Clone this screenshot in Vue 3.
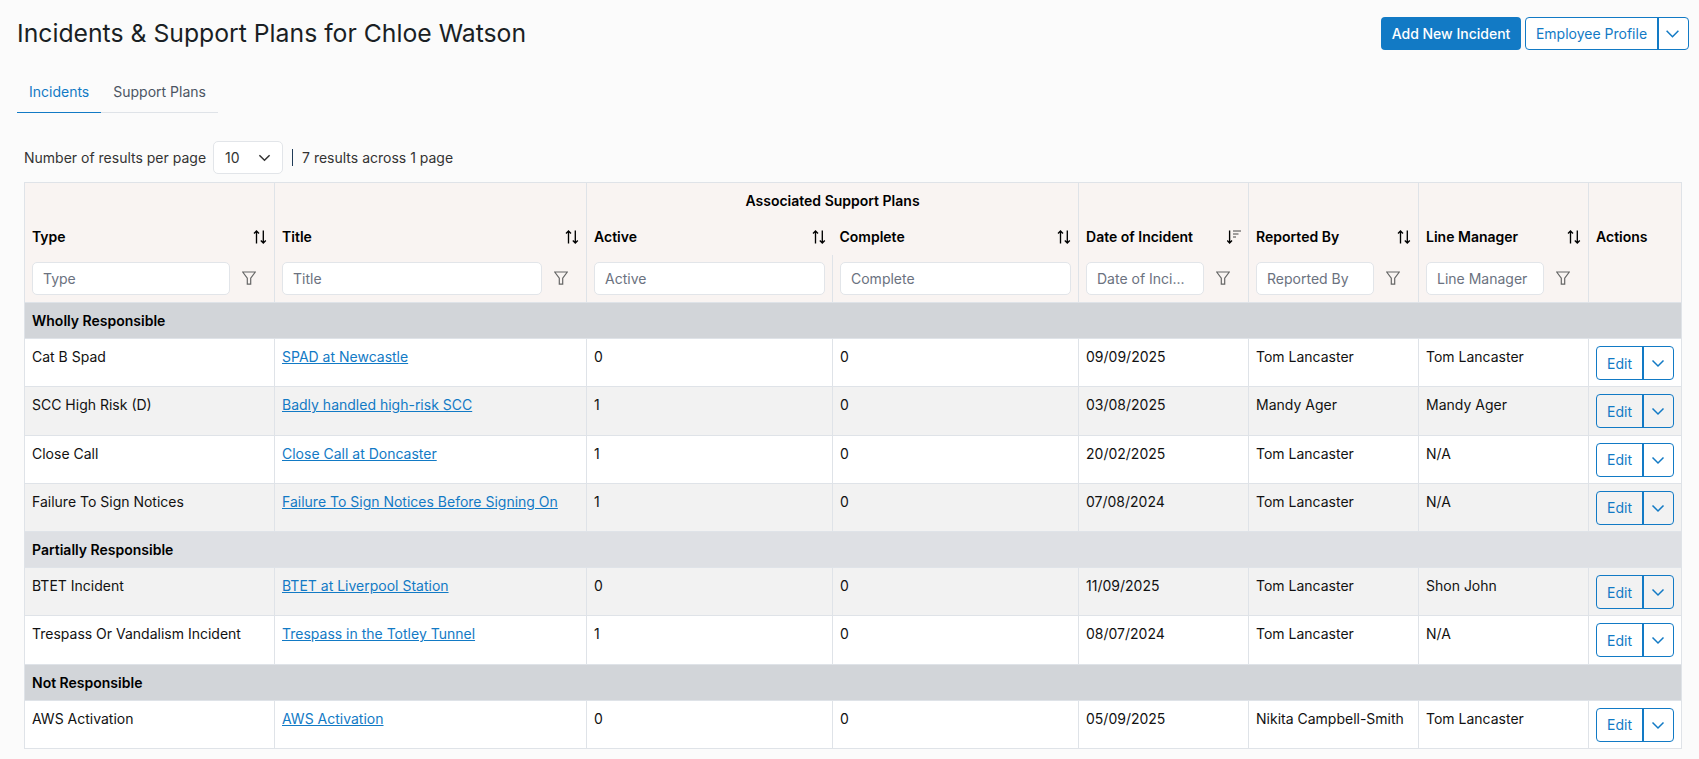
<script setup>
const sortPath = 'M3.5 13.5V1M1 3.5 3.5 1 6 3.5M10.3 .5V13M7.8 10.5l2.5 2.5 2.5-2.5'
const filterPath = 'M.7 1h12.6L8.7 7.2v5.9H5.3V7.2z'
const chevron = 'M1.5 4.5 7 10l5.5-5.5'
const sections = [
  { name: 'Wholly Responsible', cls: 'grp-dark', rows: [
    { type: 'Cat B Spad', title: 'SPAD at Newcastle', active: 0, complete: 0, date: '09/09/2025', by: 'Tom Lancaster', mgr: 'Tom Lancaster', alt: false },
    { type: 'SCC High Risk (D)', title: 'Badly handled high-risk SCC', active: 1, complete: 0, date: '03/08/2025', by: 'Mandy Ager', mgr: 'Mandy Ager', alt: true },
    { type: 'Close Call', title: 'Close Call at Doncaster', active: 1, complete: 0, date: '20/02/2025', by: 'Tom Lancaster', mgr: 'N/A', alt: false },
    { type: 'Failure To Sign Notices', title: 'Failure To Sign Notices Before Signing On', active: 1, complete: 0, date: '07/08/2024', by: 'Tom Lancaster', mgr: 'N/A', alt: true },
  ]},
  { name: 'Partially Responsible', cls: 'grp-light', rows: [
    { type: 'BTET Incident', title: 'BTET at Liverpool Station', active: 0, complete: 0, date: '11/09/2025', by: 'Tom Lancaster', mgr: 'Shon John', alt: true },
    { type: 'Trespass Or Vandalism Incident', title: 'Trespass in the Totley Tunnel', active: 1, complete: 0, date: '08/07/2024', by: 'Tom Lancaster', mgr: 'N/A', alt: false },
  ]},
  { name: 'Not Responsible', cls: 'grp-dark', rows: [
    { type: 'AWS Activation', title: 'AWS Activation', active: 0, complete: 0, date: '05/09/2025', by: 'Nikita Campbell-Smith', mgr: 'Tom Lancaster', alt: false },
  ]},
]
</script>

<template>
  <div class="page">
    <header class="top">
      <h1>Incidents &amp; Support Plans for Chloe Watson</h1>
      <div class="top-actions">
        <button class="btn primary">Add New Incident</button>
        <div class="split">
          <button class="split-main">Employee Profile</button>
          <button class="split-caret" aria-label="More">
            <svg width="15" height="15" viewBox="0 0 14 14"><path :d="chevron" fill="none" stroke="currentColor" stroke-width="1.4"/></svg>
          </button>
        </div>
      </div>
    </header>

    <nav class="tabs">
      <a class="tab active">Incidents</a>
      <a class="tab">Support Plans</a>
    </nav>

    <div class="pager">
      <span>Number of results per page</span>
      <div class="select">
        <span>10</span>
        <svg width="13" height="13" viewBox="0 0 14 14"><path :d="chevron" fill="none" stroke="#333" stroke-width="1.6"/></svg>
      </div>
      <span class="sep"></span>
      <span>7 results across 1 page</span>
    </div>

    <table class="grid">
      <colgroup>
        <col style="width:250px" /><col style="width:312px" /><col style="width:246px" /><col style="width:246px" />
        <col style="width:170px" /><col style="width:170px" /><col style="width:170px" /><col style="width:93px" />
      </colgroup>
      <thead>
        <tr class="h1">
          <th rowspan="2"><div class="hc">Type<svg class="sort" viewBox="0 0 14 14"><path :d="sortPath"/></svg></div></th>
          <th rowspan="2"><div class="hc">Title<svg class="sort" viewBox="0 0 14 14"><path :d="sortPath"/></svg></div></th>
          <th class="center" colspan="2">Associated Support Plans</th>
          <th rowspan="2"><div class="hc">Date of Incident<svg class="sort" viewBox="0 0 14 14"><path d="M2.6 .5V13M.2 10.5l2.4 2.5 2.4-2.5"/><path class="bars" d="M6 1h8M6 4h5.5M6 7h3"/></svg></div></th>
          <th rowspan="2"><div class="hc">Reported By<svg class="sort" viewBox="0 0 14 14"><path :d="sortPath"/></svg></div></th>
          <th rowspan="2"><div class="hc">Line Manager<svg class="sort" viewBox="0 0 14 14"><path :d="sortPath"/></svg></div></th>
          <th rowspan="2"><div class="hc">Actions</div></th>
        </tr>
        <tr class="h2">
          <th class="no-r"><div class="hc">Active<svg class="sort" viewBox="0 0 14 14"><path :d="sortPath"/></svg></div></th>
          <th class="no-l"><div class="hc">Complete<svg class="sort" viewBox="0 0 14 14"><path :d="sortPath"/></svg></div></th>
        </tr>
        <tr class="h3">
          <th><div class="fc"><span class="inp">Type</span><svg class="fil" viewBox="0 0 14 14"><path :d="filterPath"/></svg></div></th>
          <th><div class="fc"><span class="inp">Title</span><svg class="fil" viewBox="0 0 14 14"><path :d="filterPath"/></svg></div></th>
          <th><div class="fc"><span class="inp">Active</span></div></th>
          <th><div class="fc"><span class="inp">Complete</span></div></th>
          <th><div class="fc"><span class="inp">Date of Inci...</span><svg class="fil" viewBox="0 0 14 14"><path :d="filterPath"/></svg></div></th>
          <th><div class="fc"><span class="inp">Reported By</span><svg class="fil" viewBox="0 0 14 14"><path :d="filterPath"/></svg></div></th>
          <th><div class="fc"><span class="inp">Line Manager</span><svg class="fil" viewBox="0 0 14 14"><path :d="filterPath"/></svg></div></th>
          <th></th>
        </tr>
      </thead>
      <tbody>
        <template v-for="s in sections" :key="s.name">
          <tr class="grp" :class="s.cls"><td colspan="8">{{ s.name }}</td></tr>
          <tr v-for="r in s.rows" :key="r.title" class="row" :class="{ alt: r.alt }">
            <td>{{ r.type }}</td>
            <td><a class="link">{{ r.title }}</a></td>
            <td>{{ r.active }}</td>
            <td>{{ r.complete }}</td>
            <td>{{ r.date }}</td>
            <td>{{ r.by }}</td>
            <td>{{ r.mgr }}</td>
            <td>
              <div class="split small">
                <button class="split-main">Edit</button>
                <button class="split-caret" aria-label="More">
                  <svg width="14" height="14" viewBox="0 0 14 14"><path :d="chevron" fill="none" stroke="currentColor" stroke-width="1.5"/></svg>
                </button>
              </div>
            </td>
          </tr>
        </template>
      </tbody>
    </table>
  </div>
</template>

<style>
html, body { background: #fbfbfb; }
</style>

<style scoped>
.page {
  font-family: Inter, "Liberation Sans", sans-serif;
  font-size: 14px;
  color: #111;
  padding: 17px 10px 0 17px;
  width: 1699px;
  box-sizing: border-box;
  height: 759px;
  overflow: hidden;
}
.top { display: flex; justify-content: space-between; align-items: flex-start; height: 50px; }
h1 { margin: 0; font-size: 24.75px; font-weight: 400; line-height: 33px; color: #1a1f24; }
.top-actions { display: flex; gap: 4px; }
button { font-family: inherit; font-size: 14px; cursor: pointer; }
.btn.primary {
  width: 140px; height: 33px; border: none; border-radius: 4px;
  background: #127ac5; color: #fff; font-weight: 500; padding: 0;
}
.split { display: flex; height: 33px; border: 1px solid #127ac5; border-radius: 4px; box-sizing: border-box; background: #fff; width: 164px; color: #127ac5; }
.split-main { flex: 1; border: none; background: transparent; color: inherit; padding: 0; border-right: 2px solid #127ac5; }
.split-caret { width: 29px; border: none; background: transparent; color: inherit; padding: 0 2px 0 0; display: flex; align-items: center; justify-content: center; }
.split.small { width: 78px; height: 34px; }
.split.small .split-caret { width: 29px; }
.row.alt .split { background: #f2f2f2; }

.tabs { display: flex; width: 201px; height: 46px; box-sizing: border-box; border-bottom: 1px solid #dfe3e8; }
.tab { padding: 0 12px; line-height: 50px; height: 46px; box-sizing: border-box; color: #4b5563; }
.tab.active { color: #127ac5; border-bottom: 1px solid #127ac5; }

.pager { display: flex; align-items: center; margin: 28px 0 8px 7px; height: 33px; color: #333; }
.select { margin-left: 7px; width: 70px; height: 33px; box-sizing: border-box; border: 1px solid #e2e5e9; border-radius: 5px; background: #fff; display: flex; align-items: center; justify-content: space-between; padding: 0 11px; }
.sep { width: 1px; height: 17px; background: #1f3b57; margin: 0 9px 0 9px; }

.grid { border-collapse: collapse; table-layout: fixed; width: 1657px; margin-left: 7px; }
th, td { border: 1px solid #dfe3e8; padding: 0 7px; text-align: left; box-sizing: border-box; }
thead th { background: #f9f4f2; font-weight: 600; font-size: 14px; color: #000; vertical-align: bottom; }
.h1 th, .h2 th { border-bottom: none; }
.h2 th, .h3 th { border-top: none; }
.h1 th { height: 40px; padding-bottom: 8px; }
.h1 th.center { text-align: center; vertical-align: top; padding: 8px 7px 0; line-height: 20px; }
.h2 th { height: 32px; padding-bottom: 8px; }
.h2 th.no-r { border-right: none; }
.h2 th.no-l { border-left: none; }
.hc { display: flex; justify-content: space-between; align-items: center; height: 20px; }
.sort { width: 14px; height: 14px; flex: none; fill: none; stroke: #000; stroke-width: 1.35; }
.sort .bars { stroke: #444; stroke-width: 1; }
.h3 th { height: 48px; padding: 0 7px; vertical-align: middle; }
.fc { display: flex; align-items: center; gap: 12px; }
.inp { flex: 1; min-width: 0; height: 33px; box-sizing: border-box; border: 1px solid #e2e5e9; border-radius: 5px; background: #fff; font-weight: 400; font-size: 14px; color: #6b7280; padding: 0 10px; line-height: 31px; white-space: nowrap; overflow: hidden; }
.fil { width: 14px; height: 14px; flex: none; margin-right: 11px; fill: none; stroke: #666; stroke-width: 1.2; }
.grp td { height: 36px; padding: 0 7px; font-weight: 600; font-size: 14px; color: #000; }
.grp-dark td { background: #d2d5d9; }
.grp-light td { background: #dee0e4; }
.row td { background: #fff; height: 48.3px; vertical-align: top; padding: 8px 7px; line-height: 20px; white-space: nowrap; color: #111; }
.row.alt td { background: #f2f2f2; }
.row td:last-child { padding: 7px 7px 0 7px; }
.link { color: #127ac5; text-decoration: underline; }
</style>
